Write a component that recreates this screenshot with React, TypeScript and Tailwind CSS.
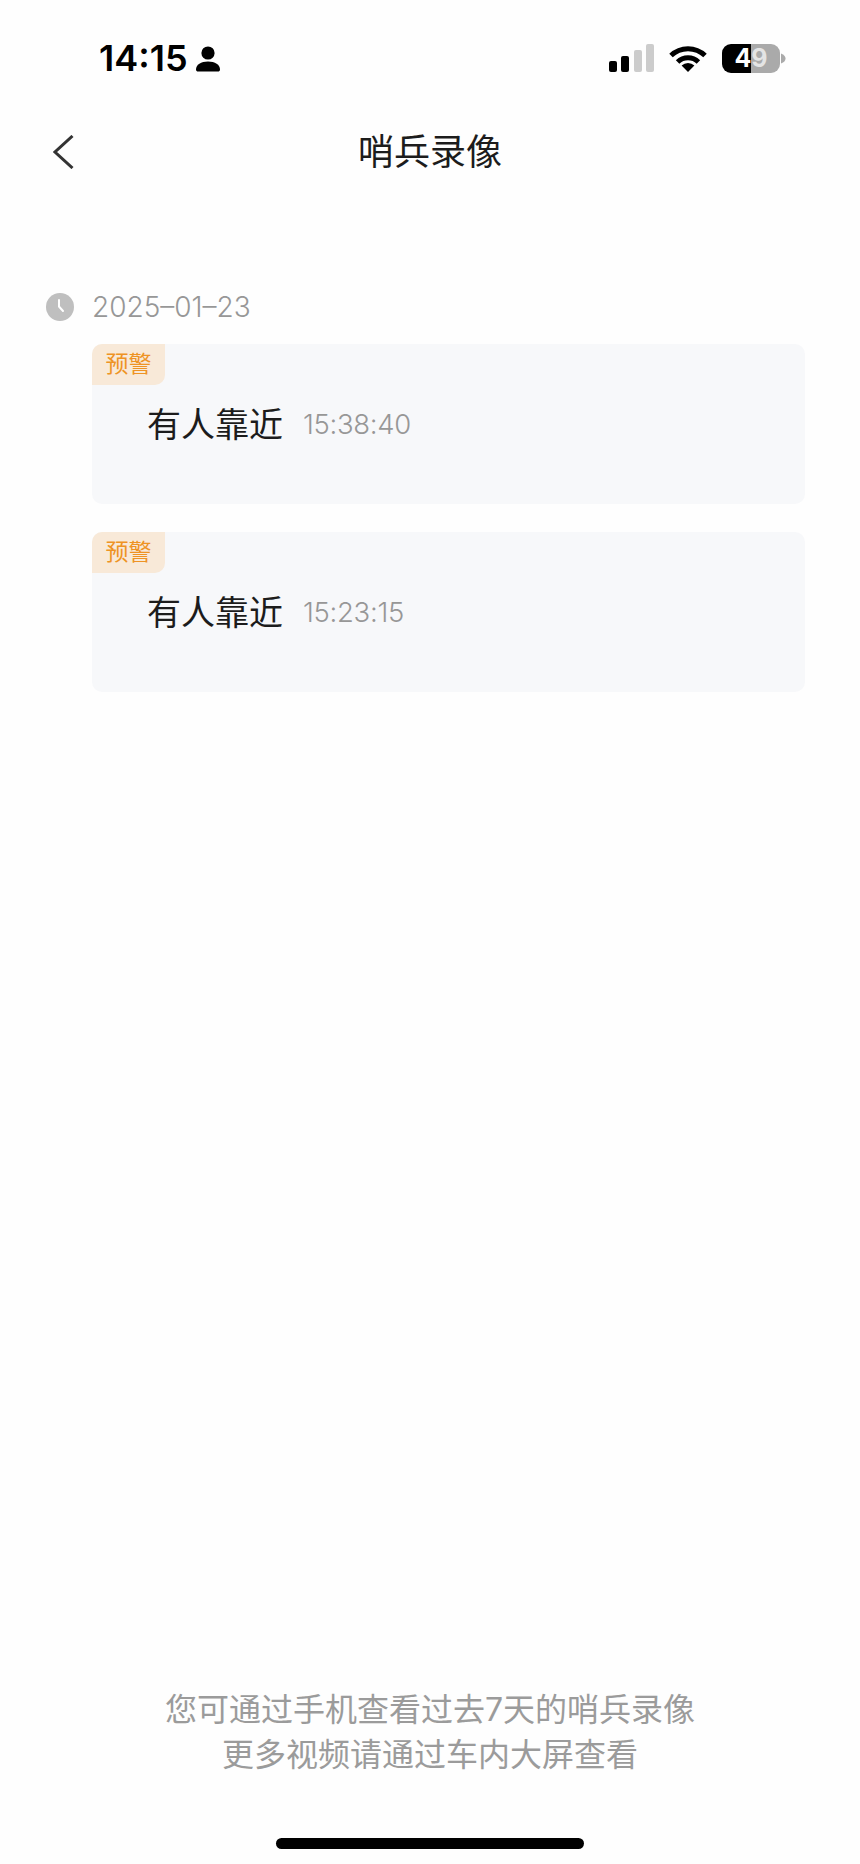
const cjk = "font-['Inter','Noto_Sans_CJK_SC',sans-serif]";

function Person() {
  return (
    <svg width="24" height="26" viewBox="0 0 24 26" className="ml-[8px] mt-[1px]">
      <circle cx="12" cy="7" r="6.6" fill="#000" />
      <path d="M0 23.5C0 18.5 5 15.5 12 15.5S24 18.5 24 23.5C24 25 23 25.5 22 25.5H2C1 25.5 0 25 0 23.5Z" fill="#000" />
    </svg>
  );
}

function Signal() {
  return (
    <div className="flex items-end gap-[4.4px] h-[28px]">
      <div className="w-[8px] h-[11px] rounded-[2px] bg-black" />
      <div className="w-[8px] h-[16px] rounded-[2px] bg-black" />
      <div className="w-[8px] h-[22px] rounded-[2px] bg-[#cccccc]" />
      <div className="w-[8px] h-[28px] rounded-[2px] bg-[#cccccc]" />
    </div>
  );
}

function Wifi() {
  return (
    <svg width="38" height="28" viewBox="0 0 38 28" fill="none" className="ml-[15px]">
      <path d="M2 11.5A24.5 24.5 0 0 1 36 11.5" stroke="#000" strokeWidth="5" />
      <path d="M8.6 18A15 15 0 0 1 29.4 18" stroke="#000" strokeWidth="5" />
      <path d="M19 28L12.6 21.6A9.4 9.4 0 0 1 25.4 21.6Z" fill="#000" />
    </svg>
  );
}

function Battery() {
  return (
    <div className="flex items-center ml-[15px]">
      <div className="w-[58px] h-[29px] rounded-[9px] bg-[linear-gradient(90deg,#000_50%,#aaaaaa_50%)] flex items-center justify-center text-[25px] font-bold leading-none font-['Inter',sans-serif]">
        <span className="text-white">4</span>
        <span className="text-[#e4e4e4]">9</span>
      </div>
      <svg width="5" height="11" viewBox="0 0 5 11" className="ml-[1px]">
        <path d="M0 0.5C3 1.5 4.5 3.5 4.5 5.5S3 9.5 0 10.5Z" fill="#aaaaaa" />
      </svg>
    </div>
  );
}

function ClockIcon() {
  return (
    <svg width="28" height="28" viewBox="0 0 28 28" className="shrink-0">
      <circle cx="14" cy="14" r="14" fill="#bfbfbf" />
      <path d="M13 7V13.5L17 18" stroke="#fff" strokeWidth="2" fill="none" strokeLinecap="round" />
    </svg>
  );
}

function RecordCard({ time }: { time: string }) {
  return (
    <div className="h-[160px] rounded-[10px] bg-[#f7f8fa] overflow-hidden flex flex-col">
      <div className="w-[73px] h-[41px] rounded-br-[10px] bg-[#f8e9d8] flex items-center justify-center text-[23px] leading-none text-[#ee9324]">
        预警
      </div>
      <div className="flex items-center pl-[55px] mt-[17px] h-[46px]">
        <span className="text-[34px] leading-none text-[#1c1c1c]">有人靠近</span>
        <span className="ml-[20px] text-[27.5px] tracking-[-0.3px] leading-none font-light text-[#979797]">{time}</span>
      </div>
    </div>
  );
}

export default function App() {
  return (
    <div className={`w-[860px] h-[1864px] bg-[#fefefe] flex flex-col ${cjk}`}>
      <div className="h-[118px] pl-[99px] pr-[74px] pt-[44px] flex justify-between items-start">
        <div className="flex items-center h-[28px]">
          <span className="text-[36px] leading-none font-semibold text-black font-['Inter',sans-serif]">14:15</span>
          <Person />
        </div>
        <div className="flex items-center h-[28px]">
          <Signal />
          <Wifi />
          <Battery />
        </div>
      </div>

      <div className="h-[68px] px-[53px] flex items-center relative">
        <svg width="21" height="34" viewBox="0 0 21 34" fill="none" className="mt-[-1px]">
          <path d="M19.5 1L2 17L19.5 33" stroke="#333333" strokeWidth="3" />
        </svg>
        <h1 className="absolute inset-x-0 text-center text-[36px] leading-none font-normal text-[#1c1c1c]">哨兵录像</h1>
      </div>

      <div className="mt-[107px] pl-[46px] flex items-center gap-[18px] h-[28px]">
        <ClockIcon />
        <span className="text-[28px] leading-none font-light text-[#979797]">2025–01–23</span>
      </div>

      <div className="mt-[23px] ml-[92px] w-[713px] flex flex-col gap-[28px]">
        <RecordCard time="15:38:40" />
        <RecordCard time="15:23:15" />
      </div>

      <div className="flex-1" />

      <div className="text-center text-[32px] leading-[45px] text-[#9b9b9b]">
        <p>您可通过手机查看过去7天的哨兵录像</p>
        <p>更多视频请通过车内大屏查看</p>
      </div>

      <div className="mt-[61px] mb-[15px] mx-auto w-[308px] h-[11px] rounded-full bg-black" />
    </div>
  );
}
